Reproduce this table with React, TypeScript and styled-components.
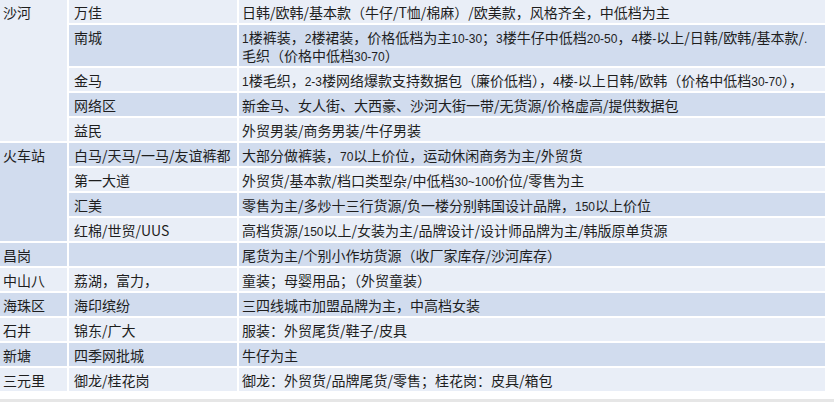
import React from "react";
import styled, { createGlobalStyle } from "styled-components";

const Global = createGlobalStyle`
  html, body { margin: 0; padding: 0; background: #ffffff; }
  body {
    font-family: "Noto Sans CJK SC", "Noto Sans", sans-serif;
    color: #1e1e1e;
  }
`;

const Page = styled.div`
  width: 834px;
  height: 402px;
  display: flex;
  flex-direction: column;
  overflow: hidden;
`;

const Table = styled.table`
  border-collapse: collapse;
  table-layout: fixed;
  width: 825px;
`;

const Cell = styled.td<{ $dark: boolean; $pad: number }>`
  background: ${(p) => (p.$dark ? "#d1dcee" : "#e9eef7")};
  border-right: 2px solid #ffffff;
  border-bottom: 2px solid #ffffff;
  padding: 3px ${(p) => p.$pad}px 2px;
  font-size: 14px;
  line-height: 18px;
  height: 18px;
  vertical-align: top;
  white-space: nowrap;
  overflow: hidden;
  &:last-child { border-right: none; }
`;

const Latin = styled.span`
  font-family: "Liberation Sans", Arial, sans-serif;
  font-size: 12px;
  line-height: 12px;
`;

const Footer = styled.div`
  margin-top: 6px;
  height: 6px;
  background: #e6e6e6;
`;

function txt(s: string) {
  const parts = s.split(/([0-9.\-~]+)/);
  return parts.map((p, i) =>
    /^[0-9.\-~]+$/.test(p) ? <Latin key={i}>{p}</Latin> : <React.Fragment key={i}>{p}</React.Fragment>
  );
}

type Row = { region?: string; span?: number; market: string; desc: string[] };

const rows: Row[] = [
  { region: "沙河", span: 5, market: "万佳", desc: ["日韩/欧韩/基本款（牛仔/T恤/棉麻）/欧美款，风格齐全，中低档为主"] },
  {
    market: "南城",
    desc: [
      "1楼裤装，2楼裙装，价格低档为主10-30；3楼牛仔中低档20-50，4楼-以上/日韩/欧韩/基本款/.",
      "毛织（价格中低档30-70）",
    ],
  },
  { market: "金马", desc: ["1楼毛织，2-3楼网络爆款支持数据包（廉价低档），4楼-以上日韩/欧韩（价格中低档30-70），"] },
  { market: "网络区", desc: ["新金马、女人街、大西豪、沙河大街一带/无货源/价格虚高/提供数据包"] },
  { market: "益民", desc: ["外贸男装/商务男装/牛仔男装"] },
  { region: "火车站", span: 4, market: "白马/天马/一马/友谊裤都", desc: ["大部分做裤装，70以上价位，运动休闲商务为主/外贸货"] },
  { market: "第一大道", desc: ["外贸货/基本款/档口类型杂/中低档30~100价位/零售为主"] },
  { market: "汇美", desc: ["零售为主/多炒十三行货源/负一楼分别韩国设计品牌，150以上价位"] },
  { market: "红棉/世贸/UUS", desc: ["高档货源/150以上/女装为主/品牌设计/设计师品牌为主/韩版原单货源"] },
  { region: "昌岗", span: 1, market: "", desc: ["尾货为主/个别小作坊货源（收厂家库存/沙河库存）"] },
  { region: "中山八", span: 1, market: "荔湖，富力，", desc: ["童装；母婴用品；（外贸童装）"] },
  { region: "海珠区", span: 1, market: "海印缤纷", desc: ["三四线城市加盟品牌为主，中高档女装"] },
  { region: "石井", span: 1, market: "锦东/广大", desc: ["服装：外贸尾货/鞋子/皮具"] },
  { region: "新塘", span: 1, market: "四季网批城", desc: ["牛仔为主"] },
  { region: "三元里", span: 1, market: "御龙/桂花岗", desc: ["御龙：外贸货/品牌尾货/零售；桂花岗：皮具/箱包"] },
];

export default function App() {
  return (
    <Page>
      <Global />
      <Table>
        <colgroup>
          <col style={{ width: 68 }} />
          <col style={{ width: 170 }} />
          <col />
        </colgroup>
        <tbody>
          {rows.map((r, i) => {
            const dark = i % 2 === 1;
            return (
              <tr key={i}>
                {r.region !== undefined && (
                  <Cell $dark={dark} $pad={3} rowSpan={r.span}>
                    {r.region}
                  </Cell>
                )}
                <Cell $dark={dark} $pad={5}>{txt(r.market)}</Cell>
                <Cell $dark={dark} $pad={3}>
                  {r.desc.map((d, j) => (
                    <React.Fragment key={j}>
                      {j > 0 && <br />}
                      {txt(d)}
                    </React.Fragment>
                  ))}
                </Cell>
              </tr>
            );
          })}
        </tbody>
      </Table>
      <Footer />
    </Page>
  );
}
